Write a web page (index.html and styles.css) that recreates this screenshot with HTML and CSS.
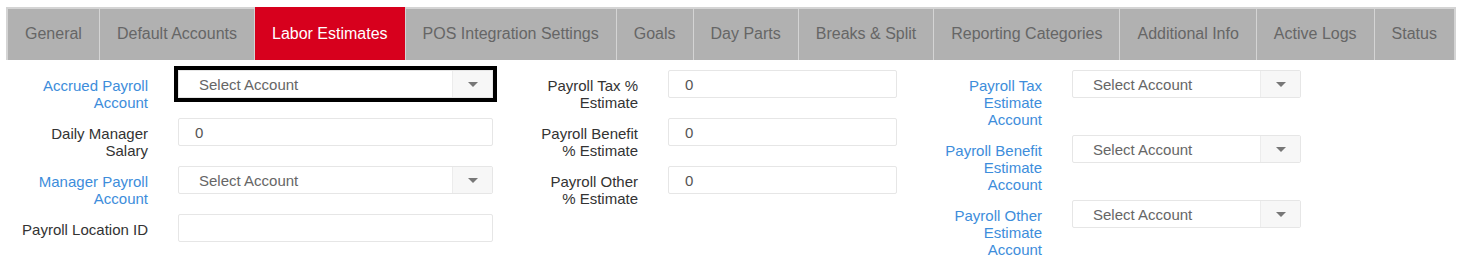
FILE: index.html
```html
<!DOCTYPE html>
<html>
<head>
<meta charset="utf-8">
<link rel="stylesheet" href="styles.css">
</head>
<body>
<nav class="tabs">
  <div class="tab first">General</div>
  <div class="tab">Default Accounts</div>
  <div class="tab active">Labor Estimates</div>
  <div class="tab">POS Integration Settings</div>
  <div class="tab">Goals</div>
  <div class="tab">Day Parts</div>
  <div class="tab">Breaks &amp; Split</div>
  <div class="tab">Reporting Categories</div>
  <div class="tab">Additional Info</div>
  <div class="tab">Active Logs</div>
  <div class="tab">Status</div>
</nav>
<div class="form">
  <div class="col col-a">
    <div class="row">
      <div class="label link">Accrued Payroll Account</div>
      <div class="select focused"><span class="sel-text">Select Account</span><span class="arrow"></span></div>
    </div>
    <div class="row">
      <div class="label">Daily Manager Salary</div>
      <div class="input">0</div>
    </div>
    <div class="row">
      <div class="label link">Manager Payroll Account</div>
      <div class="select"><span class="sel-text">Select Account</span><span class="arrow"></span></div>
    </div>
    <div class="row">
      <div class="label">Payroll Location ID</div>
      <div class="input"></div>
    </div>
  </div>
  <div class="col col-b">
    <div class="row">
      <div class="label">Payroll Tax % Estimate</div>
      <div class="input">0</div>
    </div>
    <div class="row">
      <div class="label">Payroll Benefit % Estimate</div>
      <div class="input">0</div>
    </div>
    <div class="row">
      <div class="label">Payroll Other % Estimate</div>
      <div class="input">0</div>
    </div>
  </div>
  <div class="col col-c">
    <div class="row">
      <div class="label link">Payroll Tax Estimate Account</div>
      <div class="select"><span class="sel-text">Select Account</span><span class="arrow"></span></div>
    </div>
    <div class="row">
      <div class="label link">Payroll Benefit Estimate Account</div>
      <div class="select"><span class="sel-text">Select Account</span><span class="arrow"></span></div>
    </div>
    <div class="row">
      <div class="label link">Payroll Other Estimate Account</div>
      <div class="select"><span class="sel-text">Select Account</span><span class="arrow"></span></div>
    </div>
  </div>
</div>
</body>
</html>
```
FILE: styles.css
```css
html, body {
  margin: 0;
  padding: 0;
  background: #fff;
  font-family: "Liberation Sans", Arial, sans-serif;
}

.tabs {
  display: inline-flex;
  margin: 7px 0 0 6px;
  padding: 2px 2px 0 2px;
  background: #d4d4d4;
}

.tab {
  height: 51px;
  padding: 0 17px 2px;
  box-sizing: border-box;
  display: flex;
  align-items: center;
  background: #b1b1b1;
  color: #666;
  font-size: 16px;
  border-left: 1px solid #d4d4d4;
  white-space: nowrap;
}

.tab.first {
  border-left: none;
}

.tab.active {
  background: #d7001d;
  color: #fff;
  margin-top: -2px;
  height: 53px;
  padding-bottom: 0;
}

.form {
  display: flex;
  align-items: flex-start;
  margin-top: 10px;
  padding-left: 13px;
}

.col {
  display: flex;
  flex-direction: column;
}

.col-b {
  margin-left: 45px;
}

.col-c {
  margin-left: 35px;
}

.row {
  display: flex;
  align-items: flex-start;
}

.label {
  font-size: 15px;
  line-height: 17px;
  color: #333;
  text-align: right;
  padding: 7px 0;
  margin-right: 30px;
  flex: none;
}

.col-a .label { width: 135px; }
.col-b .label { width: 100px; }
.col-c .label { width: 110px; }

.label.link {
  color: #3d8ddb;
}

.input, .select {
  height: 28px;
  margin-bottom: 20px;
  box-sizing: border-box;
  border: 1px solid #e6e6e6;
  border-radius: 2px;
  background: #fff;
  font-size: 15px;
  display: flex;
  align-items: center;
}

.col-a .input, .col-a .select { width: 315px; }
.col-b .input, .col-c .select { width: 229px; }

.input {
  padding-left: 16px;
  color: #555;
}

.select {
  justify-content: space-between;
}

.select.focused {
  border-radius: 0;
  outline: 4px solid #000;
}

.sel-text {
  padding-left: 20px;
  color: #666;
}

.arrow {
  width: 40px;
  height: 100%;
  background: #f7f7f7;
  border-left: 1px solid #ececec;
  box-sizing: border-box;
  position: relative;
}

.arrow::after {
  content: "";
  position: absolute;
  left: 15px;
  top: 11px;
  border-left: 5px solid transparent;
  border-right: 5px solid transparent;
  border-top: 5px solid #777;
}
```
